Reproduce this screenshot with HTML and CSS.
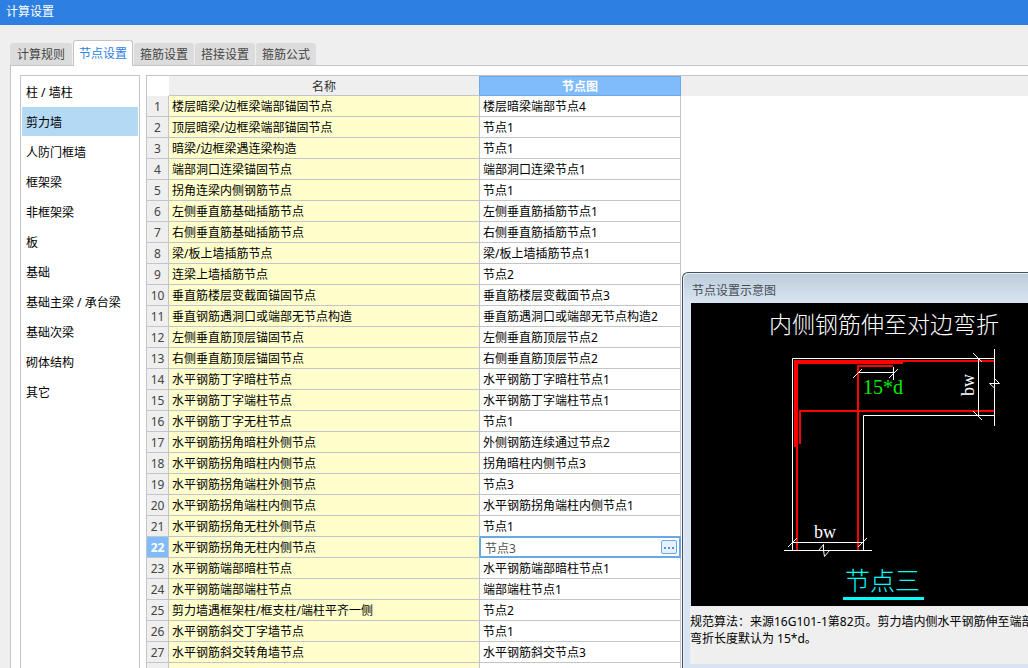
FILE: index.html
```html
<!DOCTYPE html>
<html lang="zh-CN">
<head>
<meta charset="utf-8">
<title>计算设置</title>
<link rel="stylesheet" href="styles.css">
</head>
<body>
<header class="titlebar"><h1>计算设置</h1></header>
<main class="body">
  <nav class="tabs" role="tablist">
    <button class="tab" role="tab">计算规则</button>
    <button class="tab active" role="tab" aria-selected="true">节点设置</button>
    <button class="tab" role="tab">箍筋设置</button>
    <button class="tab" role="tab">搭接设置</button>
    <button class="tab" role="tab">箍筋公式</button>
  </nav>
  <section class="panel">
    <div class="categories">
      <button class="category">柱 / 墙柱</button>
      <button class="category selected">剪力墙</button>
      <button class="category">人防门框墙</button>
      <button class="category">框架梁</button>
      <button class="category">非框架梁</button>
      <button class="category">板</button>
      <button class="category">基础</button>
      <button class="category">基础主梁 / 承台梁</button>
      <button class="category">基础次梁</button>
      <button class="category">砌体结构</button>
      <button class="category">其它</button>
    </div>
    <div class="grid-area">
      <table class="grid">
        <colgroup><col class="col-num"><col class="col-name"><col class="col-node"><col></colgroup>
        <thead><tr><td class="corner"></td><th>名称</th><th class="current">节点图</th><td class="rest"></td></tr></thead>
        <tbody>
          <tr><th>1</th><td>楼层暗梁/边框梁端部锚固节点</td><td>楼层暗梁端部节点4</td></tr>
          <tr><th>2</th><td>顶层暗梁/边框梁端部锚固节点</td><td>节点1</td></tr>
          <tr><th>3</th><td>暗梁/边框梁遇连梁构造</td><td>节点1</td></tr>
          <tr><th>4</th><td>端部洞口连梁锚固节点</td><td>端部洞口连梁节点1</td></tr>
          <tr><th>5</th><td>拐角连梁内侧钢筋节点</td><td>节点1</td></tr>
          <tr><th>6</th><td>左侧垂直筋基础插筋节点</td><td>左侧垂直筋插筋节点1</td></tr>
          <tr><th>7</th><td>右侧垂直筋基础插筋节点</td><td>右侧垂直筋插筋节点1</td></tr>
          <tr><th>8</th><td>梁/板上墙插筋节点</td><td>梁/板上墙插筋节点1</td></tr>
          <tr><th>9</th><td>连梁上墙插筋节点</td><td>节点2</td></tr>
          <tr><th>10</th><td>垂直筋楼层变截面锚固节点</td><td>垂直筋楼层变截面节点3</td></tr>
          <tr><th>11</th><td>垂直钢筋遇洞口或端部无节点构造</td><td>垂直筋遇洞口或端部无节点构造2</td></tr>
          <tr><th>12</th><td>左侧垂直筋顶层锚固节点</td><td>左侧垂直筋顶层节点2</td></tr>
          <tr><th>13</th><td>右侧垂直筋顶层锚固节点</td><td>右侧垂直筋顶层节点2</td></tr>
          <tr><th>14</th><td>水平钢筋丁字暗柱节点</td><td>水平钢筋丁字暗柱节点1</td></tr>
          <tr><th>15</th><td>水平钢筋丁字端柱节点</td><td>水平钢筋丁字端柱节点1</td></tr>
          <tr><th>16</th><td>水平钢筋丁字无柱节点</td><td>节点1</td></tr>
          <tr><th>17</th><td>水平钢筋拐角暗柱外侧节点</td><td>外侧钢筋连续通过节点2</td></tr>
          <tr><th>18</th><td>水平钢筋拐角暗柱内侧节点</td><td>拐角暗柱内侧节点3</td></tr>
          <tr><th>19</th><td>水平钢筋拐角端柱外侧节点</td><td>节点3</td></tr>
          <tr><th>20</th><td>水平钢筋拐角端柱内侧节点</td><td>水平钢筋拐角端柱内侧节点1</td></tr>
          <tr class="above-editing"><th>21</th><td>水平钢筋拐角无柱外侧节点</td><td>节点1</td></tr>
          <tr class="editing"><th>22</th><td>水平钢筋拐角无柱内侧节点</td><td><div class="editor"><input type="text" value="节点3" aria-label="节点图"><button class="more" aria-label="选择节点图"><svg viewBox="0 0 14 12"><path d="M2 6h2v2H2zM6 6h2v2H6zM10 6h2v2h-2z"/></svg></button></div></td></tr>
          <tr><th>23</th><td>水平钢筋端部暗柱节点</td><td>水平钢筋端部暗柱节点1</td></tr>
          <tr><th>24</th><td>水平钢筋端部端柱节点</td><td>端部端柱节点1</td></tr>
          <tr><th>25</th><td>剪力墙遇框架柱/框支柱/端柱平齐一侧</td><td>节点2</td></tr>
          <tr><th>26</th><td>水平钢筋斜交丁字墙节点</td><td>节点1</td></tr>
          <tr><th>27</th><td>水平钢筋斜交转角墙节点</td><td>水平钢筋斜交节点3</td></tr>
          <tr><th></th><td></td><td></td></tr>
        </tbody>
      </table>
    </div>
  </section>
</main>
<aside class="dialog" role="dialog" aria-labelledby="dialog-title">
  <h2 id="dialog-title">节点设置示意图</h2>
  <svg class="drawing" viewBox="691 303 337 303" preserveAspectRatio="xMinYMin meet">
    <g class="rebar">
      <path d="M795 361H994M795 363H903M795 360V447M797 360V550M800 444V411H994M858 550V366H893"/>
    </g>
    <g class="outline">
      <path d="M792.5 550V358.5H994M863.5 550V415.5H994M994.5 349V426M978.5 358V416M858 372.5H894M893.5 367V380M792 542.5H864M784 550.5H872"/>
      <path d="M853 378L862 369M889 378L898 369M973 353L982 362M973 411L982 420M788 547L797 538M858 547L867 538M819 550L823.500 544.500V550.500L824.500 556.500L829 551M994.500 378.500L999.500 383.500H989.500L994.500 388"/>
    </g>
    <text class="caption" x="769" y="333">内侧钢筋伸至对边弯折</text>
    <text class="length" x="863" y="394">15*d</text>
    <text class="width" x="814" y="538">bw</text>
    <text class="width" transform="translate(974 396) rotate(-90)">bw</text>
    <text class="name" x="845" y="590">节点三</text>
    <path class="underline" d="M843 598.500H924"/>
  </svg>
  <div class="note">
    <p>规范算法：来源16G101-1第82页。剪力墙内侧水平钢筋伸至端部</p>
    <p>弯折长度默认为 15*d。</p>
  </div>
</aside>
</body>
</html>
```

FILE: styles.css
```css
* { box-sizing: border-box; }
html, body { height: 100%; }
body {
  margin: 0;
  display: flex;
  flex-direction: column;
  position: relative;
  overflow: hidden;
  background: #efefef;
  color: #000;
  font: 12px/20px "Noto Sans", "Noto Sans CJK SC", sans-serif;
}
button, input { font: inherit; color: inherit; margin: 0; border: 0; padding: 0; }
h1, h2, p { margin: 0; font-weight: normal; }
.titlebar { flex: none; height: 25px; padding: 2px 6px; background: #2d80e2; color: #fff; }
.titlebar h1 { font-size: 12px; line-height: 20px; }
.body { flex: 1; min-height: 0; display: flex; flex-direction: column; padding: 15px 0 0 10px; }
.tabs { display: flex; align-items: flex-end; gap: 1px; height: 26px; flex: none; position: relative; z-index: 1; margin-bottom: -1px; }
.tab { height: 22px; margin-bottom: 1px; padding: 0 6px; background: #dcdcdc; color: #444; border-radius: 3px 3px 0 0; line-height: 24px; }
.tab:first-child { padding: 0 7px; }
.tab.active { height: 26px; margin: 0; padding: 0 5px; background: #fff; color: #2d80e2; border: 1px solid #c3c4cc; border-bottom: 0; line-height: 24px; }
.panel { flex: 1; min-height: 0; display: flex; gap: 6px; padding: 9px 0 0 9px; background: #fff; border: solid #c3c4cc; border-width: 1px 0 0 1px; }
.categories { flex: none; width: 120px; padding: 1px; border: 1px solid #c3c4cc; border-bottom: 0; display: flex; flex-direction: column; gap: 1px; }
.category { height: 29px; flex: none; padding: 0 4px; background: none; text-align: left; line-height: 31px; white-space: nowrap; }
.category.selected { background: #b3d9f5; }
.grid-area { flex: 1; min-width: 0; border: solid #c3c4cc; border-width: 1px 0 0 1px; }
.grid { width: 100%; table-layout: fixed; border-collapse: separate; border-spacing: 0; }
.col-num { width: 22px; }
.col-name { width: 311px; }
.col-node { width: 201px; }
.grid th, .grid td { height: 21px; padding: 2px 0 0 3px; border: solid #c3c4cc; border-width: 0 1px 1px 0; font-weight: normal; text-align: left; white-space: nowrap; line-height: 18px; overflow: hidden; }
.grid thead th, .grid thead td { height: 20px; line-height: 17px; padding: 2px 0 0; text-align: center; background: #efefef; color: #333; }
.grid thead .corner { background: #fff; border-color: #fff; }
.grid thead .rest { border-color: #efefef; }
.grid thead .current { background: #80bbfc; color: #fff; font-weight: bold; border-color: #6aaae8; box-shadow: inset 0 1px #6aaae8; }
.grid thead th:nth-child(2) { border-right-color: #6aaae8; }
.grid tbody th { padding: 2px 0 0; text-align: center; background: #efefef; color: #444; }
.grid tbody td:nth-child(2) { background: #ffffcc; }
.grid .editing th { background: #80bbfc; color: #fff; font-weight: bold; }
.grid .editing td:nth-child(2) { border-right-color: #68a8e4; }
.grid .above-editing td:last-child { border-bottom-color: #68a8e4; }
.grid .editing td:last-child { padding: 0; border: 0; }
.editor { display: flex; align-items: center; height: 21px; padding: 0 2px 0 4px; border: solid #68a8e4; border-width: 1px 2px 2px 1px; color: #555; }
.editor input { flex: 1; min-width: 0; height: 18px; padding-top: 1px; background: none; outline: 0; line-height: 17px; }
.more { width: 16px; height: 14px; background: #e6f1fb; border: 1px solid #68a8e4; border-radius: 2px; display: flex; }
.more svg { width: 100%; height: 100%; fill: #4c97dc; }
.dialog { position: absolute; left: 682px; top: 272px; right: 0; bottom: 0; display: flex; flex-direction: column; padding: 0 0 4px 7px; border: solid #494f58; border-width: 1px 0 0 1px; border-radius: 6px 0 0 0; background: linear-gradient(#bdccda, #d8e4f1 30px); box-shadow: inset 1px 1px #e8eff6; overflow: hidden; }
.dialog h2 { flex: none; height: 30px; padding: 0 2px; font-size: 12px; line-height: 36px; color: #444d57; }
.drawing { flex: none; width: calc(100% - 1px); margin-left: 1px; background: #000; fill: none; }
.rebar { stroke: #f00; stroke-width: 2; shape-rendering: crispEdges; }
.outline { stroke: #fff; stroke-width: 1; }
.drawing text { font-family: "Liberation Serif", "Noto Sans CJK SC", serif; }
.drawing .caption { font-size: 23px; font-weight: 300; fill: #fff; }
.drawing .length { font-size: 20px; fill: #0e0; }
.drawing .width { font-size: 18px; fill: #fff; }
.drawing .name { font-size: 25px; font-weight: 300; fill: #0ff; }
.underline { stroke: #0ff; stroke-width: 3; }
.note { flex: 1; padding: 7px 0 0; background: #efefef; line-height: 17px; white-space: nowrap; overflow: hidden; }
```
